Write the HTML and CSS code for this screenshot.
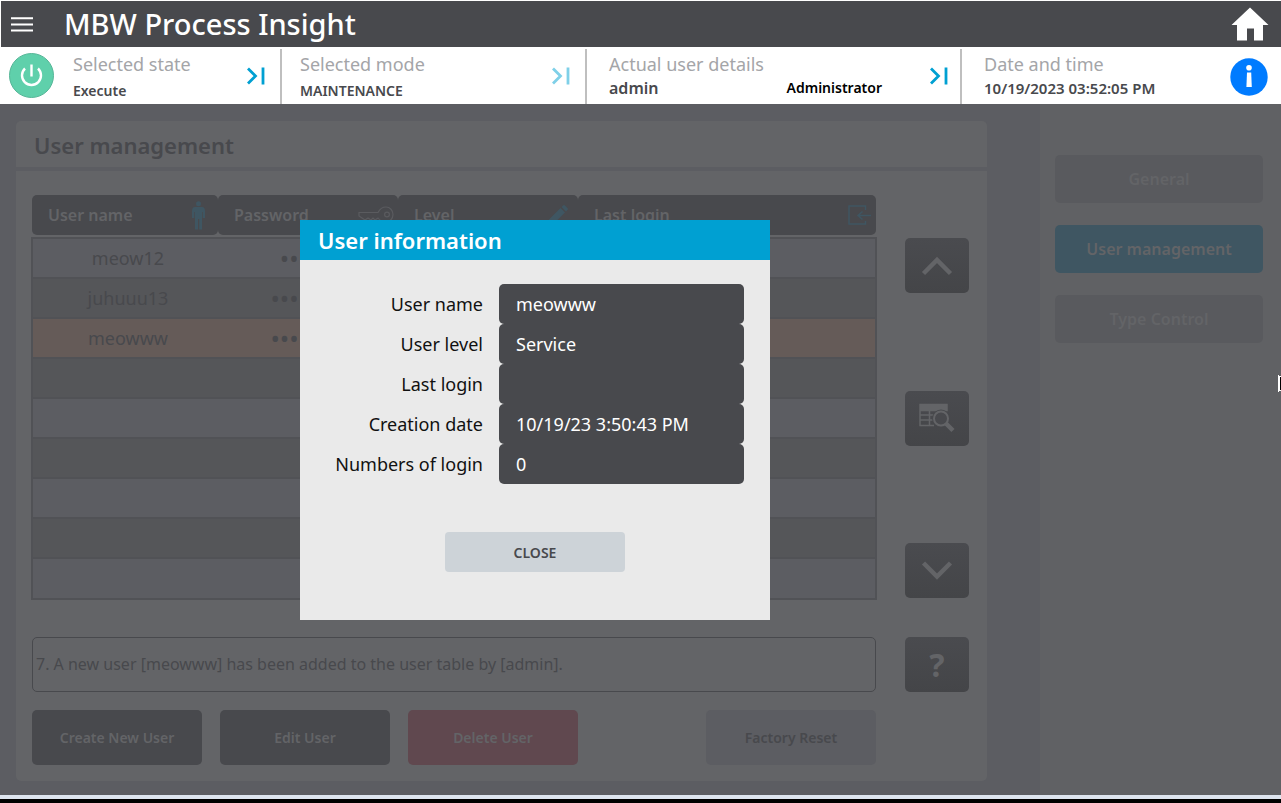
FILE: index.html
```html
<!DOCTYPE html>
<html lang="en">
<head>
<meta charset="utf-8">
<title>MBW Process Insight</title>
<link rel="stylesheet" href="styles.css">
</head>
<body>
<div class="app">
  <header class="topbar">
    <button class="icon-btn" aria-label="Menu">
      <svg width="22" height="15" viewBox="0 0 22 15"><path d="M0 1.200h22M0 7.400h22M0 13.600h22" stroke="#fff" stroke-width="2"/></svg>
    </button>
    <h1 class="app-title">MBW Process Insight</h1>
    <button class="icon-btn home" aria-label="Home">
      <svg width="38" height="34" viewBox="0 0 38 34"><path d="M19 0.500 37.500 18H32v15.500h-9V21.500h-7v12H6V18H.500z" fill="#fff"/></svg>
    </button>
  </header>

  <section class="status">
    <div class="cell state">
      <svg class="power" width="45" height="45" viewBox="0 0 45 45"><circle cx="22.500" cy="22.500" r="22" fill="#5fd0ab" stroke="#55b597"/><path d="M16 15.500a9.500 9.500 0 1 0 13 0M22.500 11.500v12" fill="none" stroke="#fff" stroke-width="2.400"/></svg>
      <div class="pair"><span class="caption">Selected state</span><span class="value">Execute</span></div>
      <button class="icon-btn next" aria-label="Change state"><svg width="18" height="18" viewBox="0 0 18 18"><path d="M1 1.500 8.500 9 1 16.500M16 0.500v17" fill="none" stroke="#00a0d2" stroke-width="2.800"/></svg></button>
    </div>
    <div class="cell">
      <div class="pair"><span class="caption">Selected mode</span><span class="value">MAINTENANCE</span></div>
      <button class="icon-btn next" aria-label="Change mode"><svg width="18" height="18" viewBox="0 0 18 18"><path d="M1 1.500 8.500 9 1 16.500M16 0.500v17" fill="none" stroke="#7fd0e8" stroke-width="2.800"/></svg></button>
    </div>
    <div class="cell wide">
      <div class="pair user"><span class="caption">Actual user details</span><span class="values"><span class="value name">admin</span><span class="value role">Administrator</span></span></div>
      <button class="icon-btn next" aria-label="Change user"><svg width="18" height="18" viewBox="0 0 18 18"><path d="M1 1.500 8.500 9 1 16.500M16 0.500v17" fill="none" stroke="#00a0d2" stroke-width="2.800"/></svg></button>
    </div>
    <div class="cell wide">
      <div class="pair time"><span class="caption">Date and time</span><span class="value">10/19/2023 03:52:05 PM</span></div>
      <button class="icon-btn info" aria-label="Information"><svg width="38" height="38" viewBox="0 0 38 38"><circle cx="19" cy="19" r="18.700" fill="#007bff"/><circle cx="19" cy="9.800" r="2.800" fill="#fff"/><path d="M17 14.500h4.200l.6 14.500h-5.400z" fill="#fff"/></svg></button>
    </div>
  </section>

  <main class="main">
    <div class="content">
      <h2 class="panel-title">User management</h2>
      <div class="panel">
        <table class="users">
          <colgroup><col class="c1"><col class="c2"><col class="c2"><col></colgroup>
          <thead><tr>
            <th><div class="head">User name
              <svg width="13" height="29" viewBox="0 0 13 29" fill="#3f5662"><circle cx="6.500" cy="2.700" r="2.500"/><path d="M3 6h7q3 0 3 4v7h-2.300v-6H10v17.500H7.200V18H6v10.500H3V11h-.7v6H0v-7q0-4 3-4z"/></svg></div></th>
            <th><div class="head key">Password
              <svg width="36" height="20" viewBox="0 0 36 20" fill="none" stroke="#5a5b5f" stroke-width="1.200"><path d="M1 7.500h19C22 3.500 24.500 2 28 2c4 0 7 3.500 7 7.500S32 17 28 17c-3.500 0-6-1.500-8-4l-3 2-2-2-2 2-3-2-3 2-3-2-3-2z"/><circle cx="29" cy="9.500" r="2.400"/></svg></div></th>
            <th><div class="head pen">Level
              <svg width="20" height="20" viewBox="0 0 20 20" fill="#3f5662"><path d="M0 20v-4.500L12.500 3l4.500 4.500L4.500 20zM13.600 2 15 .600q1-1 2 0L19.400 3q1 1 0 2L18 6.400z"/></svg></div></th>
            <th><div class="head login">Last login
              <svg width="23" height="20" viewBox="0 0 23 20" fill="none" stroke="#3f5662" stroke-width="1.500"><path d="M17.500 5V1H1v18h16.500v-3M23 10.500H10M14.500 6.500l-4.500 4 4.500 4"/></svg></div></th>
          </tr></thead>
          <tbody>
            <tr><td>meow12</td><td>••••••</td><td></td><td></td></tr>
            <tr><td>juhuuu13</td><td>••••••••</td><td></td><td></td></tr>
            <tr class="selected"><td>meowww</td><td>••••••••</td><td></td><td></td></tr>
            <tr><td></td><td></td><td></td><td></td></tr>
            <tr><td></td><td></td><td></td><td></td></tr>
            <tr><td></td><td></td><td></td><td></td></tr>
            <tr><td></td><td></td><td></td><td></td></tr>
            <tr><td></td><td></td><td></td><td></td></tr>
            <tr><td></td><td></td><td></td><td></td></tr>
          </tbody>
        </table>
        <div class="tools">
          <button class="tool" aria-label="Scroll up"><svg width="32" height="20" viewBox="0 0 32 20"><path d="M2.500 17.500 16 4l13.500 13.500" fill="none" stroke="#636467" stroke-width="4.500"/></svg></button>
          <button class="tool" aria-label="Search table"><svg width="36" height="30" viewBox="0 0 36 30"><path d="M1 1.500h27v6H1zM1 1v21.500h14M1 12h15M1 17h13M10.500 7v15" fill="none" stroke="#636467" stroke-width="1.500"/><path d="M1 1h27v6.500H1z" fill="#636467"/><circle cx="22" cy="15.500" r="9" fill="#48494d"/><circle cx="22" cy="15.500" r="7" fill="none" stroke="#636467" stroke-width="2"/><path d="m27 20.500 7 7" stroke="#636467" stroke-width="4.500"/></svg></button>
          <button class="tool" aria-label="Scroll down"><svg width="32" height="20" viewBox="0 0 32 20"><path d="M2.500 2 16 15.500 29.500 2" fill="none" stroke="#636467" stroke-width="4.500"/></svg></button>
        </div>
        <output class="log">7. A new user [meowww] has been added to the user table by [admin].</output>
        <button class="tool help">?</button>
        <div class="actions">
          <button class="action">Create New User</button>
          <button class="action">Edit User</button>
          <button class="action delete">Delete User</button>
          <button class="action reset">Factory Reset</button>
        </div>
      </div>
    </div>
    <nav class="sidebar">
      <button class="tab">General</button>
      <button class="tab active">User management</button>
      <button class="tab">Type Control</button>
    </nav>

    <div class="dialog" role="dialog" aria-labelledby="dialog-title">
      <h2 class="dialog-title" id="dialog-title">User information</h2>
      <form class="dialog-body">
        <div class="fields">
          <label for="f-name">User name</label><input id="f-name" value="meowww" readonly>
          <label for="f-level">User level</label><input id="f-level" value="Service" readonly>
          <label for="f-last">Last login</label><input id="f-last" value="" readonly>
          <label for="f-date">Creation date</label><input id="f-date" value="10/19/23 3:50:43 PM" readonly>
          <label for="f-count">Numbers of login</label><input id="f-count" value="0" readonly>
        </div>
        <button class="close" type="button">CLOSE</button>
      </form>
    </div>
    <svg class="pointer" width="3" height="17" viewBox="0 0 3 17"><path d="M0 0h1v1h2v1H2v13h1v1H1v1H0z" fill="#fff"/><path d="M2 2h1v13H2z" fill="#000"/></svg>
  </main>
  <footer class="footer"></footer>
</div>
</body>
</html>
```

FILE: styles.css
```css
* { box-sizing: border-box; }
body {
  margin: 0;
  background: #fff;
  font-family: "Noto Sans", "Open Sans", sans-serif;
  color: #48494d;
}
h1, h2 { margin: 0; font-weight: 600; }
button, input { font-family: inherit; border: 0; margin: 0; padding: 0; }
svg { display: block; flex: none; }
.app { min-height: 100vh; display: flex; flex-direction: column; }

.topbar {
  display: flex;
  align-items: center;
  height: 46px;
  margin: 1px 0 0 1px;
  padding: 0 12px 0 10px;
  background: #48494d;
}
.app-title { margin-left: 31px; font-size: 29px; font-weight: 500; line-height: 46px; color: #fff; }
.icon-btn { background: none; }
.home { margin-left: auto; }

.status {
  display: grid;
  grid-template-columns: 280fr 305fr 375fr 321fr;
  height: 57px;
  padding-top: 2px;
  background: #fff;
}
.cell {
  display: flex;
  padding: 3px 15px 0 18px;
  border-left: 2px solid #bfbfbf;
}
.cell.state { padding-left: 9px; border-left: 0; }
.cell.wide { padding: 3px 12px 0 22px; }
.power { margin: 1px 19px 0 0; }
.pair { display: flex; flex-direction: column; }
.caption { font-size: 18px; line-height: 24px; color: #a4a5a8; }
.value { font-size: 14px; line-height: 30px; font-weight: 600; }
.next { margin: 0 0 6px auto; }
.user { flex: 1; }
.values { display: flex; justify-content: space-between; padding-right: 48px; }
.user .value, .time .value { line-height: 24px; }
.user .name { font-size: 16px; }
.time .value { font-size: 15px; }
.user .role { color: #000; }
.info { margin: 0 1px 5px auto; }

.main {
  position: relative;
  flex: 1;
  display: flex;
  background: #5c5d62;
}
.content { flex: 1; padding: 17px 53px 14px 16px; }
.panel-title {
  height: 46px;
  padding-left: 18px;
  border-radius: 5px 5px 0 0;
  background: #636467;
  font-size: 22px;
  line-height: 48px;
}
.panel {
  display: grid;
  grid-template-columns: 1fr 64px;
  grid-template-rows: auto 55px auto;
  column-gap: 28px;
  margin-top: 4px;
  padding: 24px 18px 16px 15px;
  border-radius: 0 0 5px 5px;
  background: #636467;
}
.users {
  width: 100%;
  margin-bottom: 37px;
  table-layout: fixed;
  border-spacing: 0;
}
.c1 { width: 187px; }
.c2 { width: 180px; }
.users th { padding: 0 0 2px; }
.users th:first-child { padding-left: 1px; }
.users th:last-child { padding-right: 1px; }
.head {
  display: flex;
  align-items: center;
  justify-content: space-between;
  height: 40px;
  padding: 0 13px 0 16px;
  border-radius: 5px;
  background: #48494d;
  color: #636467;
  font-size: 16px;
  font-weight: 600;
}
.key { padding-right: 4px; }
.pen { padding-right: 10px; }
.login { padding-right: 5px; }
.users td {
  height: 40px;
  padding: 0;
  border-top: 2px solid #515256;
  background: #5c5d62;
  font-size: 18px;
  line-height: 24px;
  text-align: center;
}
.users td:first-child { padding-left: 5px; border-left: 2px solid #515256; }
.users td:nth-child(2) { font-size: 25px; }
.users tr:nth-child(even) td { background: #555659; }
.users .selected td { background: #655b58; }
.users td:last-child { border-right: 2px solid #515256; }
.users tr:last-child td { height: 43px; border-bottom: 2px solid #515256; }

.tools {
  display: flex;
  flex-direction: column;
  justify-content: space-between;
  padding: 43px 0 39px;
}
.tool {
  display: flex;
  align-items: center;
  justify-content: center;
  width: 64px;
  height: 55px;
  border-radius: 5px;
  background: linear-gradient(#4a4b4f, #444548);
  color: #636467;
}
.help { font-size: 32px; font-weight: 700; }
.log {
  margin: 0 1px;
  padding-left: 3px;
  border: 1px solid #48494d;
  border-radius: 5px;
  font-size: 16px;
  line-height: 53px;
}
.actions {
  display: flex;
  gap: 18px;
  padding: 18px 1px 0;
}
.action {
  width: 170px;
  height: 55px;
  border-radius: 5px;
  background: #48494d;
  color: #636467;
  font-size: 14px;
  font-weight: 600;
}
.delete { background: #60484f; }
.reset { margin-left: auto; background: #5c5d62; color: #48494d; }

.sidebar {
  display: flex;
  flex-direction: column;
  gap: 22px;
  width: 241px;
  padding: 51px 18px 0 15px;
  background: #606164;
}
.tab {
  height: 48px;
  border-radius: 5px;
  background: #595a5e;
  color: #636467;
  font-size: 16px;
  font-weight: 600;
}
.tab.active { background: #3f5662; }

.dialog {
  position: absolute;
  top: 116px;
  left: 300px;
  width: 470px;
  background: #eaeaea;
}
.dialog-title {
  padding-left: 18px;
  background: #00a0d2;
  color: #fff;
  font-size: 22px;
  line-height: 40px;
}
.dialog-body {
  display: flex;
  flex-direction: column;
  align-items: center;
  padding: 24px 26px 48px 0;
}
.fields {
  display: grid;
  grid-template-columns: 1fr 245px;
  column-gap: 16px;
  width: 100%;
}
.fields label {
  font-size: 18px;
  line-height: 40px;
  text-align: right;
  color: #111;
}
.fields input {
  height: 40px;
  padding-left: 17px;
  border-radius: 5px;
  background: #48494d;
  color: #fff;
  font-size: 18px;
}
.close {
  width: 180px;
  height: 40px;
  margin: 48px -26px 0 0;
  border-radius: 4px;
  background: #cdd3d8;
  color: #48494d;
  font-size: 14px;
  font-weight: 600;
}
.pointer { position: absolute; top: 271px; right: 0; }
.footer { height: 8px; border-top: 4px solid #dde4ee; background: #000; }
```
